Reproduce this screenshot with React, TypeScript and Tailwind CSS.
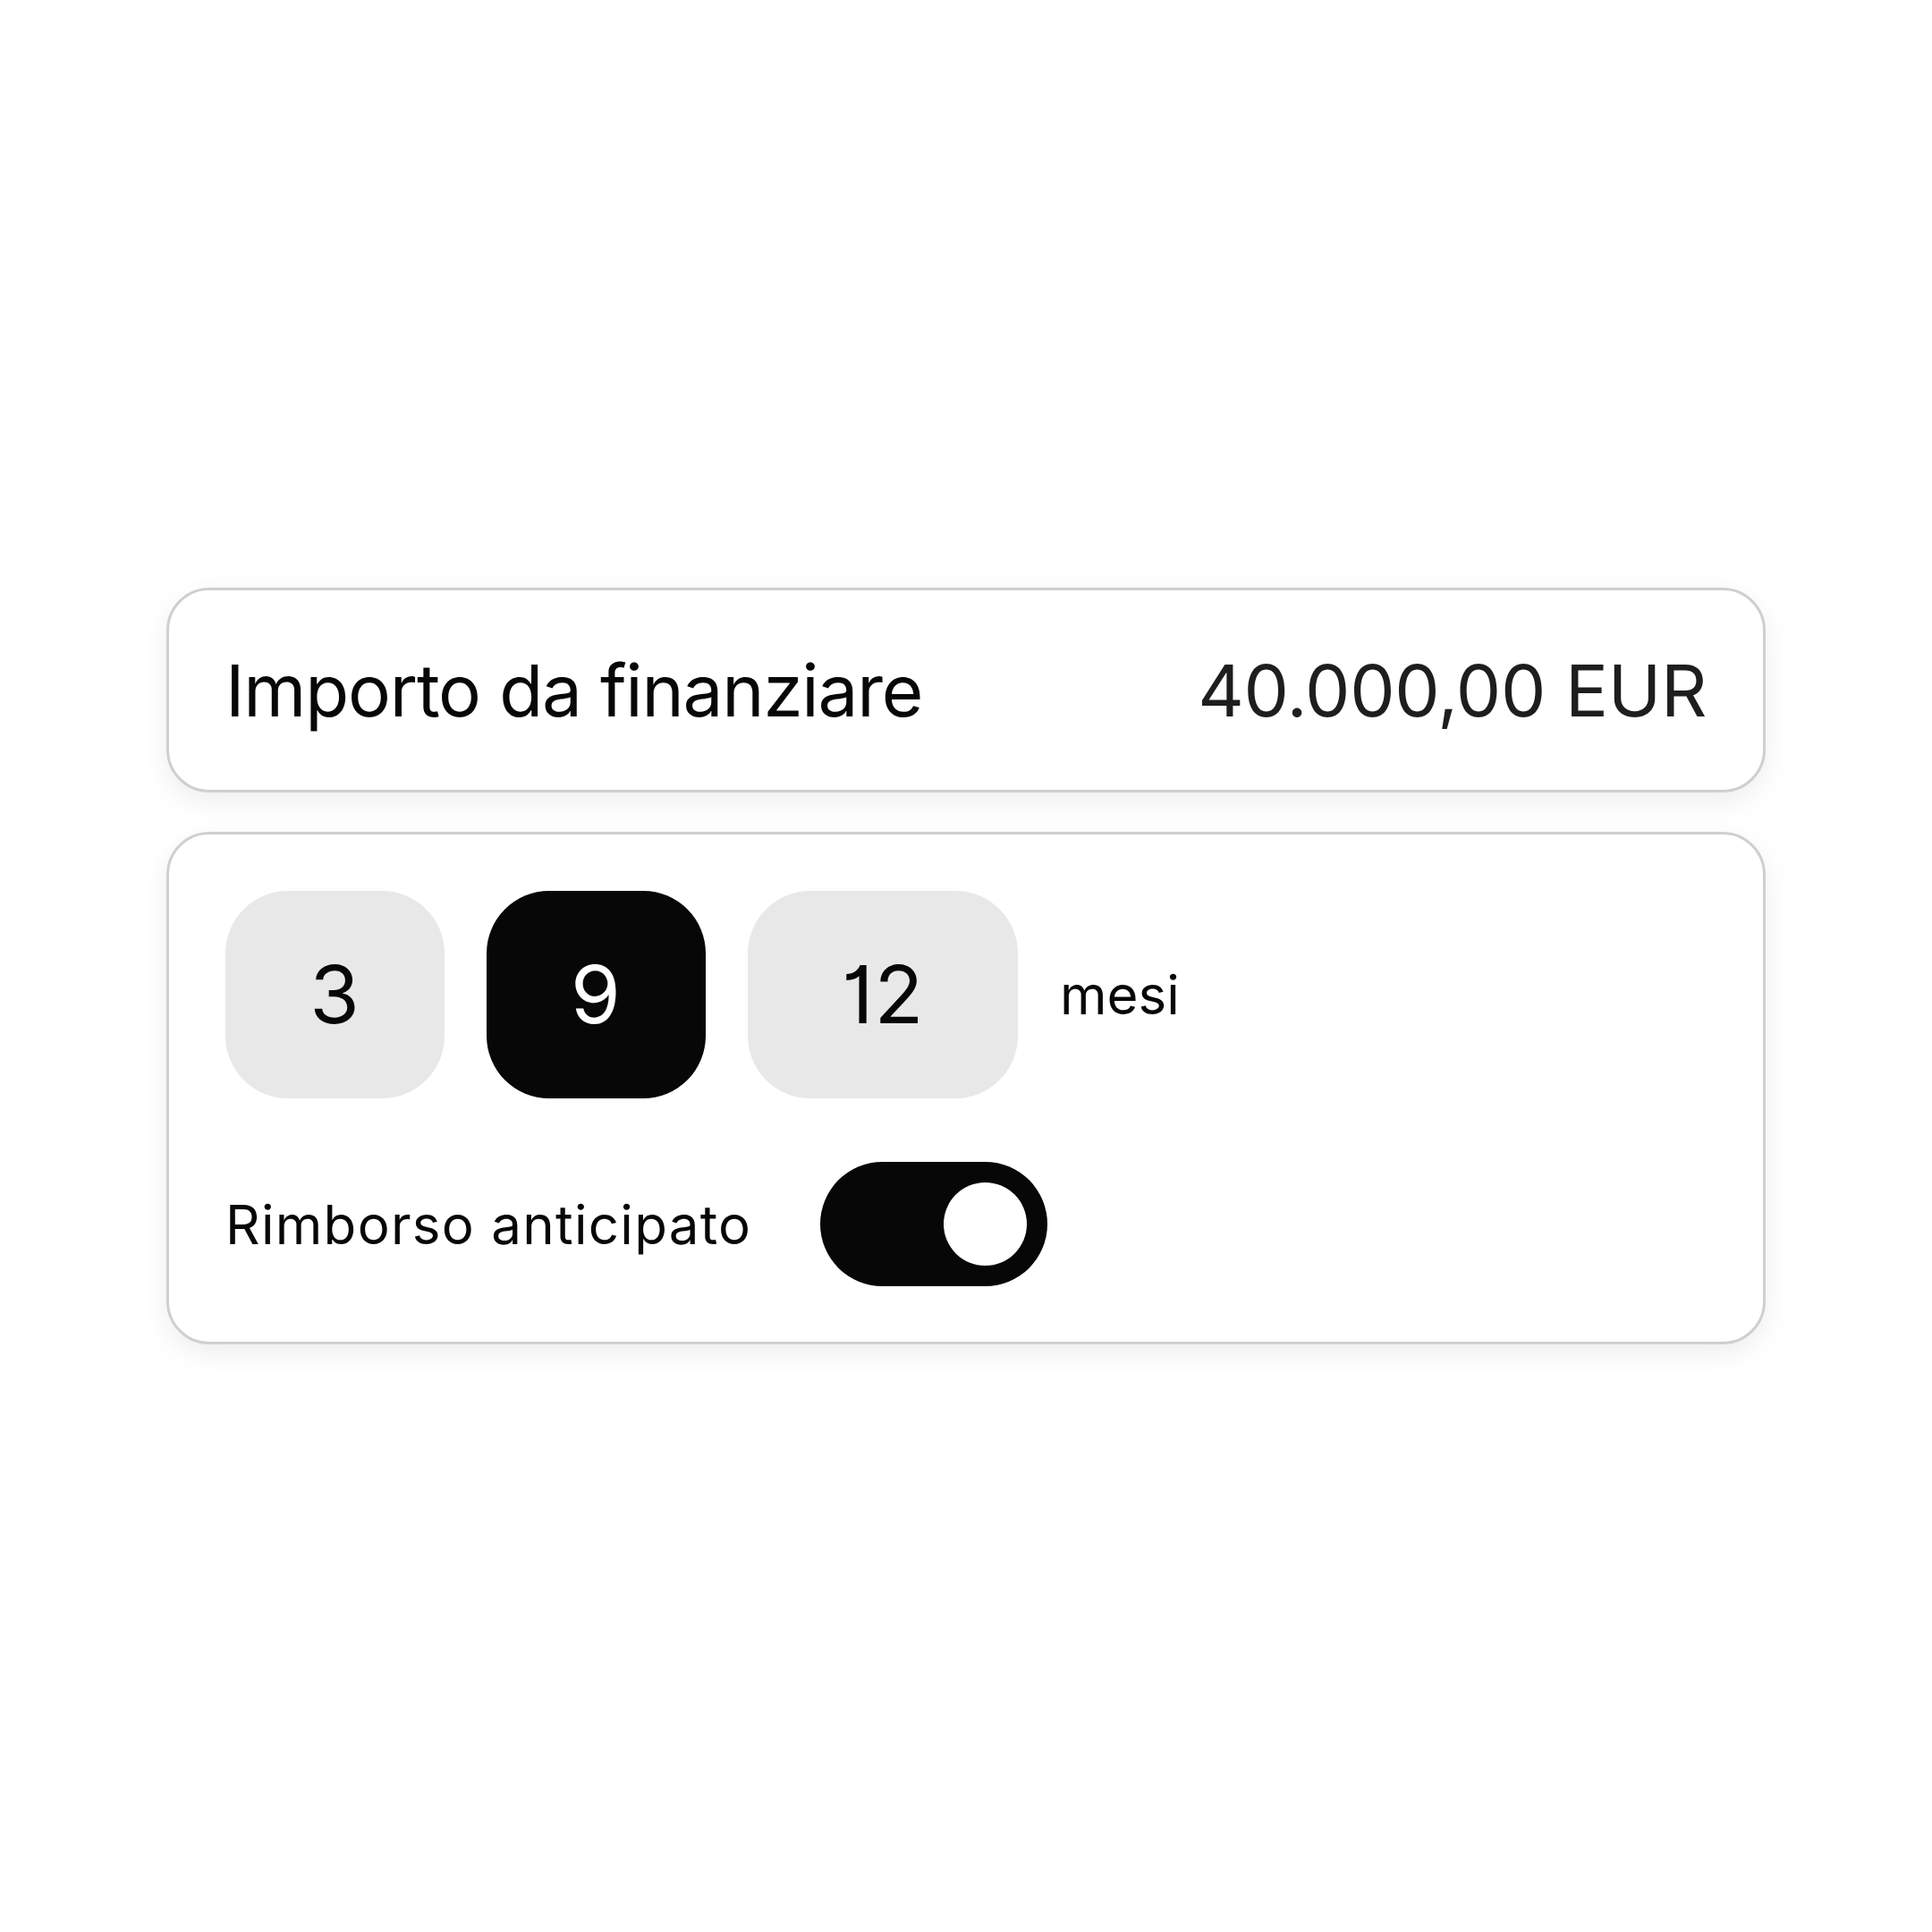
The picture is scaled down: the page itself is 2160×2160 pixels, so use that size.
import { useState } from "react";

const FONT = "font-['Inter','Liberation_Sans',sans-serif]";

const TERMS = [3, 9, 12];

function TermButton({
  value,
  active,
  onClick,
}: {
  value: number;
  active: boolean;
  onClick: () => void;
}) {
  return (
    <button
      type="button"
      onClick={onClick}
      className={`flex h-[232px] items-center justify-center rounded-[70px] text-[90px] leading-none tracking-[1px] [font-feature-settings:'cv01'] ${
        value >= 10 ? "w-[302px]" : "w-[245px]"
      } ${active ? "bg-[#070707] text-white" : "bg-[#e8e8e8] text-[#070707]"}`}
    >
      {value}
    </button>
  );
}

function Toggle({ checked, onChange }: { checked: boolean; onChange: (v: boolean) => void }) {
  return (
    <button
      type="button"
      role="switch"
      aria-checked={checked}
      onClick={() => onChange(!checked)}
      className={`flex h-[139px] w-[254px] items-center rounded-full px-[23px] ${
        checked ? "justify-end bg-[#070707]" : "justify-start bg-[#e8e8e8]"
      }`}
    >
      <span className="block h-[93px] w-[93px] rounded-full bg-white" />
    </button>
  );
}

export default function App() {
  const [term, setTerm] = useState(9);
  const [early, setEarly] = useState(true);

  return (
    <div className={`flex h-[2160px] w-[2160px] items-center justify-center bg-white ${FONT}`}>
      <div className="flex w-[1788px] flex-col gap-[44px]">
        <div className="flex h-[229px] items-center justify-between rounded-[48px] border-[3px] border-[#cfcfcf] bg-white px-[63px] shadow-[0_10px_30px_rgba(0,0,0,0.07)]">
          <span className="text-[80px] leading-none tracking-[-1.2px] text-[#070707]">
            Importo da finanziare
          </span>
          <span className="text-[80px] leading-none tracking-[-0.4px] text-[#1e1e1e]">
            40.000,00 EUR
          </span>
        </div>

        <div className="flex flex-col gap-[71px] rounded-[48px] border-[3px] border-[#cfcfcf] bg-white px-[63px] pb-[62px] pt-[63px] shadow-[0_10px_30px_rgba(0,0,0,0.07)]">
          <div className="flex items-center gap-[47px]">
            {TERMS.map((t) => (
              <TermButton key={t} value={t} active={t === term} onClick={() => setTerm(t)} />
            ))}
            <span className="text-[60px] leading-none text-[#070707]">mesi</span>
          </div>
          <div className="flex items-center gap-[77px]">
            <span className="text-[60px] leading-none tracking-[1.3px] text-[#070707]">
              Rimborso anticipato
            </span>
            <Toggle checked={early} onChange={setEarly} />
          </div>
        </div>
      </div>
    </div>
  );
}
